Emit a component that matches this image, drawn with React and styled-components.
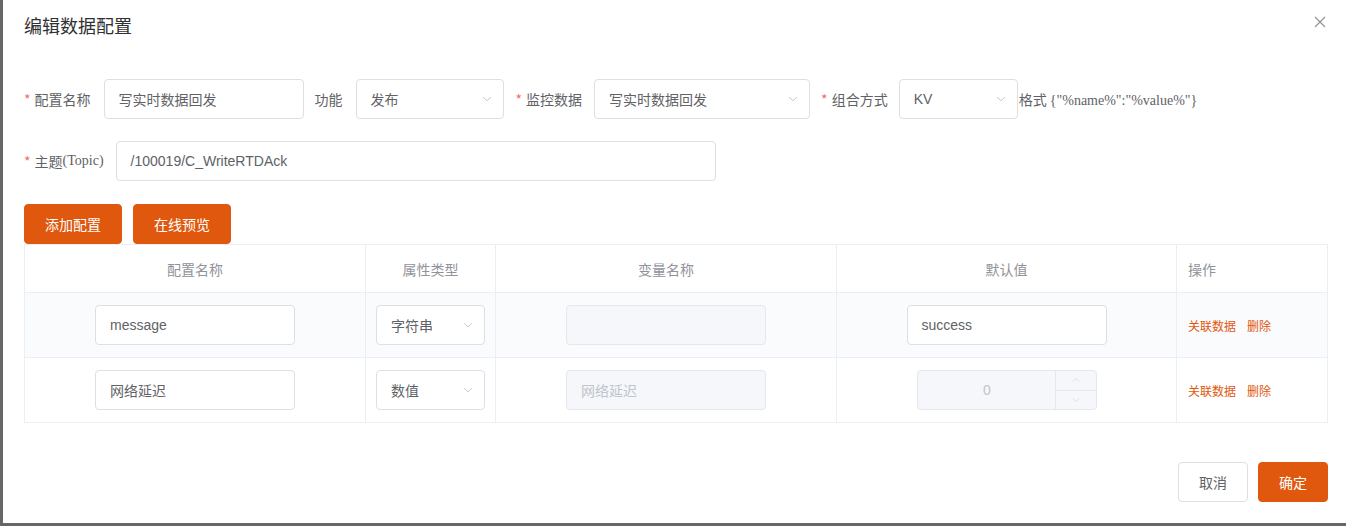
import React from 'react';
import styled, { createGlobalStyle } from 'styled-components';

const GlobalStyle = createGlobalStyle`
  html, body {
    margin: 0;
    padding: 0;
    background: #666;
    overflow: hidden;
  }
  body {
    font-family: "Liberation Sans", "Noto Sans CJK SC", sans-serif;
    font-size: 14px;
    color: #606266;
  }
`;

const ORANGE = '#e0570e';

const Dialog = styled.div`
  margin-left: 3px;
  height: 523px;
  background: #fff;
  display: flex;
  flex-direction: column;
  box-sizing: border-box;
`;

const Header = styled.div`
  display: flex;
  align-items: center;
  justify-content: space-between;
  padding: 15px 19px 0 21px;
  height: 24px;
`;

const Title = styled.span`
  font-size: 18px;
  color: #303133;
  line-height: 24px;
`;

const CloseButton = styled.span`
  display: flex;
  width: 14px;
  height: 14px;
  margin-top: -10px;
`;

const Body = styled.div`
  flex: 1;
  padding: 40px 19px 0 21px;
`;

const FormRow = styled.div`
  display: flex;
  align-items: center;
  height: 40px;
  margin-bottom: ${p => p.$mb || 0}px;
`;

const Label = styled.label`
  display: inline-flex;
  align-items: center;
  white-space: nowrap;
  color: #606266;
  font-size: 14px;
  margin-left: ${p => p.$ml || 0}px;
  margin-right: ${p => p.$mr || 13}px;
  font-family: "Noto Sans CJK SC", sans-serif;
`;

const Star = styled.span`
  color: #f56c6c;
  margin-right: 4px;
`;

const SerifText = styled.span`
  font-family: "Liberation Serif", serif;
  font-size: 14px;
`;

const InputBox = styled.div`
  box-sizing: border-box;
  width: ${p => p.$w}px;
  height: 40px;
  border: 1px solid ${p => (p.$disabled ? '#e4e7ed' : '#dcdfe6')};
  background: ${p => (p.$disabled ? '#f5f7fa' : '#fff')};
  color: ${p => (p.$disabled ? '#c0c4cc' : '#606266')};
  border-radius: 4px;
  display: flex;
  align-items: center;
  padding: 0 ${p => (p.$select ? 10 : 15)}px 0 14px;
  font-size: 14px;
  justify-content: space-between;
  flex-shrink: 0;
`;

const Chevron = ({ up, size = 12, color = '#c0c4cc' }) => (
  <svg width={size} height={size} viewBox="0 0 16 16" fill="none">
    <path
      d={up ? 'M3 10.5 L8 5.5 L13 10.5' : 'M3 5.5 L8 10.5 L13 5.5'}
      stroke={color}
      strokeWidth="1.3"
    />
  </svg>
);

const Select = ({ w, value }) => (
  <InputBox $w={w} $select>
    <span>{value}</span>
    <Chevron />
  </InputBox>
);

const Format = styled.span`
  margin-left: 1px;
  white-space: nowrap;
  color: #606266;
  font-family: "Noto Sans CJK SC", sans-serif;
`;

const ButtonRow = styled.div`
  display: flex;
  gap: 11px;
  margin-top: 23px;
`;

const Button = styled.button`
  box-sizing: border-box;
  height: 40px;
  min-width: ${p => p.$w || 70}px;
  padding: 0 20px;
  border-radius: 4px;
  font-size: 14px;
  font-family: "Noto Sans CJK SC", sans-serif;
  cursor: pointer;
  border: 1px solid ${p => (p.$primary ? ORANGE : '#dcdfe6')};
  background: ${p => (p.$primary ? ORANGE : '#fff')};
  color: ${p => (p.$primary ? '#fff' : '#606266')};
`;

const Table = styled.table`
  width: 1303px;
  border-collapse: collapse;
  table-layout: fixed;
  border: 1px solid #ebeef5;
`;

const Th = styled.th`
  height: 47px;
  border: 1px solid #ebeef5;
  font-weight: normal;
  color: #909399;
  font-size: 14px;
  font-family: "Noto Sans CJK SC", sans-serif;
  text-align: ${p => (p.$left ? 'left' : 'center')};
  padding: 0 ${p => (p.$left ? 11 : 0)}px;
`;

const Tr = styled.tr`
  background: ${p => (p.$striped ? '#fafbfd' : '#fff')};
`;

const Td = styled.td`
  height: 64px;
  border: 1px solid #ebeef5;
  padding: 0 ${p => (p.$left ? 11 : 0)}px;
`;

const Cell = styled.div`
  display: flex;
  justify-content: center;
`;

const LinkText = styled.span`
  color: ${ORANGE};
  font-size: 12px;
  font-family: "Noto Sans CJK SC", sans-serif;
  margin-right: 11px;
  cursor: pointer;
`;

const NumberBox = styled.div`
  box-sizing: border-box;
  width: 180px;
  height: 40px;
  border: 1px solid #e4e7ed;
  background: #f5f7fa;
  border-radius: 4px;
  display: flex;
  color: #c0c4cc;
`;

const NumberValue = styled.div`
  flex: 1;
  display: flex;
  align-items: center;
  justify-content: center;
  padding-left: 2px;
`;

const NumberControls = styled.div`
  width: 40px;
  border-left: 1px solid #e4e7ed;
  display: flex;
  flex-direction: column;
`;

const NumberStep = styled.div`
  flex: 1;
  display: flex;
  align-items: center;
  justify-content: center;
  border-top: ${p => (p.$down ? '1px solid #e4e7ed' : 'none')};
`;

const Footer = styled.div`
  display: flex;
  justify-content: flex-end;
  gap: 10px;
  padding: 0 18px 21px 0;
`;

const rows = [
  { name: 'message', type: '字符串', variable: '', value: 'success', striped: true },
  { name: '网络延迟', type: '数值', variable: '网络延迟', value: '0', number: true },
];

export default function App() {
  return (
    <>
      <GlobalStyle />
      <Dialog>
        <Header>
          <Title>编辑数据配置</Title>
          <CloseButton>
            <svg width="14" height="14" viewBox="0 0 14 14">
              <path d="M2 2 L12 12 M12 2 L2 12" stroke="#909399" strokeWidth="1.2" />
            </svg>
          </CloseButton>
        </Header>
        <Body>
          <FormRow $mb={22}>
            <Label><Star>*</Star>配置名称</Label>
            <InputBox $w={200}>写实时数据回发</InputBox>
            <Label $ml={11}>功能</Label>
            <Select w={148} value="发布" />
            <Label $ml={12} $mr={12}><Star>*</Star>监控数据</Label>
            <Select w={216} value="写实时数据回发" />
            <Label $ml={11} $mr={11}><Star>*</Star>组合方式</Label>
            <Select w={119} value="KV" />
            <Format>
              格式 <SerifText>{'{"%name%":"%value%"}'}</SerifText>
            </Format>
          </FormRow>
          <FormRow>
            <Label $mr={12}>
              <Star>*</Star>主题<SerifText>(Topic)</SerifText>
            </Label>
            <InputBox $w={600}>/100019/C_WriteRTDAck</InputBox>
          </FormRow>
          <ButtonRow>
            <Button $primary $w={97}>添加配置</Button>
            <Button $primary $w={97}>在线预览</Button>
          </ButtonRow>
          <Table>
            <colgroup>
              <col style={{ width: 341 }} />
              <col style={{ width: 130 }} />
              <col style={{ width: 341 }} />
              <col style={{ width: 340 }} />
              <col style={{ width: 151 }} />
            </colgroup>
            <thead>
              <tr>
                <Th>配置名称</Th>
                <Th>属性类型</Th>
                <Th>变量名称</Th>
                <Th>默认值</Th>
                <Th $left>操作</Th>
              </tr>
            </thead>
            <tbody>
              {rows.map(r => (
                <Tr key={r.name} $striped={r.striped}>
                  <Td>
                    <Cell><InputBox $w={200}>{r.name}</InputBox></Cell>
                  </Td>
                  <Td>
                    <Cell><Select w={109} value={r.type} /></Cell>
                  </Td>
                  <Td>
                    <Cell><InputBox $w={200} $disabled>{r.variable}</InputBox></Cell>
                  </Td>
                  <Td>
                    <Cell>
                      {r.number ? (
                        <NumberBox>
                          <NumberValue>{r.value}</NumberValue>
                          <NumberControls>
                            <NumberStep><Chevron up size={10} color="#d3d6dc" /></NumberStep>
                            <NumberStep $down><Chevron size={10} color="#d3d6dc" /></NumberStep>
                          </NumberControls>
                        </NumberBox>
                      ) : (
                        <InputBox $w={200}>{r.value}</InputBox>
                      )}
                    </Cell>
                  </Td>
                  <Td $left>
                    <LinkText>关联数据</LinkText>
                    <LinkText>删除</LinkText>
                  </Td>
                </Tr>
              ))}
            </tbody>
          </Table>
        </Body>
        <Footer>
          <Button>取消</Button>
          <Button $primary>确定</Button>
        </Footer>
      </Dialog>
    </>
  );
}
